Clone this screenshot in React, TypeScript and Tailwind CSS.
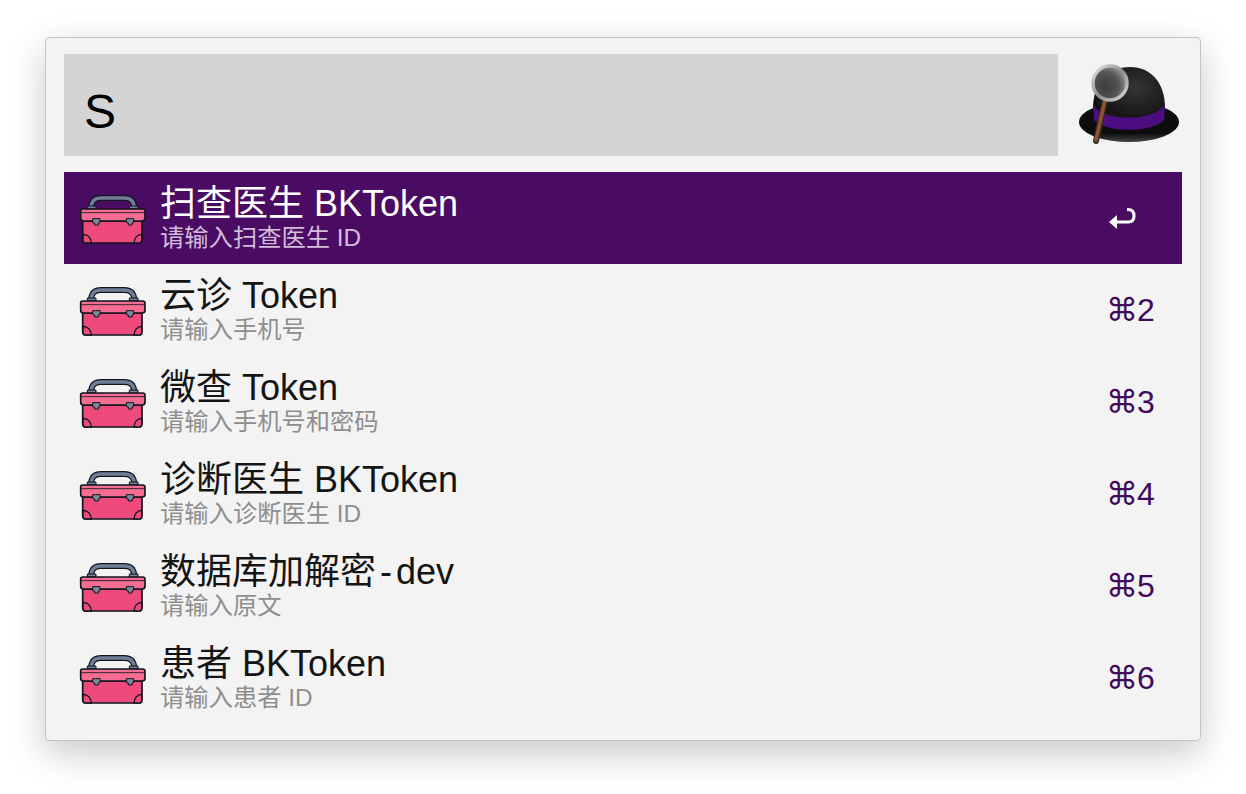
import React from "react";

const font = '"Liberation Sans", "Noto Sans CJK SC", sans-serif';

function Toolbox() {
  return (
    <svg viewBox="45 62 204 156" className="w-[68px] h-[52px] shrink-0 ml-[15px] mt-[1px]">
      <path d="M80 108 L84 92 Q90 77 110 77 L182 77 Q202 77 208 92 L212 108" fill="none" stroke="#11151f" strokeWidth="18" />
      <path d="M80 108 L84 92 Q90 77 110 77 L182 77 Q202 77 208 92 L212 108" fill="none" stroke="#6f7f98" strokeWidth="11" />
      <path d="M70 101 H96 V110 H70 Z M196 101 H222 V110 H196 Z" fill="#6f7f98" stroke="#11151f" strokeWidth="3" />
      <path d="M56 146 H234 V202 Q234 212 224 212 H66 Q56 212 56 202 Z" fill="#ee4a7c" stroke="#11151f" strokeWidth="5" />
      <path d="M50 116 Q50 110 56 110 H236 Q243 110 243 116 V138 Q243 146 235 146 H58 Q50 146 50 138 Z" fill="#f56d92" stroke="#11151f" strokeWidth="5" />
      <path d="M52 121 H241" stroke="#11151f" strokeWidth="2.5" />
      <path d="M58 186 Q80 188 82 212 H66 Q57 212 57 202 Z M233 186 Q212 188 210 212 H224 Q233 212 233 202 Z" fill="#ee4a7c" stroke="#11151f" strokeWidth="4" />
      <path d="M86 139 H108 V151 L103 152 V158 H92 V152 L86 151 Z M187 139 H209 V151 L204 152 V158 H193 V152 L187 151 Z" fill="#7d8a9e" stroke="#11151f" strokeWidth="3" />
    </svg>
  );
}

function Hat() {
  return (
    <svg viewBox="0 0 140 120" className="w-[140px] h-[120px] block">
      <defs>
        <filter id="soft"><feGaussianBlur stdDeviation="0.5" /></filter>
        <radialGradient id="dome" cx="0.6" cy="0.35" r="0.7">
          <stop offset="0" stopColor="#353535" />
          <stop offset="0.6" stopColor="#1c1c1c" />
          <stop offset="1" stopColor="#0c0c0c" />
        </radialGradient>
        <linearGradient id="brim" x1="0" y1="0" x2="0" y2="1">
          <stop offset="0" stopColor="#111" />
          <stop offset="0.8" stopColor="#111" />
          <stop offset="1" stopColor="#444" />
        </linearGradient>
        <radialGradient id="lens" cx="0.35" cy="0.6" r="0.75">
          <stop offset="0" stopColor="#3c3c3c" />
          <stop offset="0.55" stopColor="#555" />
          <stop offset="1" stopColor="#a8a8a8" />
        </radialGradient>
        <linearGradient id="ring" x1="0" y1="0" x2="1" y2="1">
          <stop offset="0" stopColor="#e8e8e8" />
          <stop offset="0.5" stopColor="#8c8c8c" />
          <stop offset="1" stopColor="#dcdcdc" />
        </linearGradient>
      </defs>
      <g filter="url(#soft)">
        <ellipse cx="69" cy="82" rx="50" ry="20" fill="url(#brim)" />
        <path d="M33 72 C32 42 48 27 70 27 C92 27 105 44 105 68 C100 90 40 92 33 72 Z" fill="url(#dome)" />
        <path d="M33 65 C45 82 92 82 105 65 L104 80 C92 93 46 93 34 80 Z" fill="#4c0f7f" />
        <path d="M45 60 L36 101" stroke="#3a2a1e" strokeWidth="6" strokeLinecap="round" />
        <path d="M45 60 L36 100" stroke="#8a5230" strokeWidth="3.5" strokeLinecap="round" />
        <circle cx="50" cy="43" r="17" fill="url(#lens)" stroke="url(#ring)" strokeWidth="3.5" />
      </g>
    </svg>
  );
}

function ReturnIcon() {
  return (
    <svg viewBox="0 0 28 24" className="w-[28px] h-[24px] absolute left-[1108px] top-[207px]" fill="none">
      <path d="M19 2.5 H20 Q26 2.5 26 9 Q26 15 20 15 H7" stroke="#fff" strokeWidth="3" />
      <path d="M1 15 L9 8 V22 Z" fill="#fff" />
    </svg>
  );
}

const rows: [React.ReactNode, string, string][] = [
  ["扫查医生 BKToken", "请输入扫查医生 ID", ""],
  ["云诊 Token", "请输入手机号", "⌘2"],
  ["微查 Token", "请输入手机号和密码", "⌘3"],
  ["诊断医生 BKToken", "请输入诊断医生 ID", "⌘4"],
  [<>数据库加解密<span className="mx-[4px]">-</span>dev</>, "请输入原文", "⌘5"],
  ["患者 BKToken", "请输入患者 ID", "⌘6"],
];

export default function App() {
  return (
    <div className="w-[1246px] h-[794px] bg-white pt-[37px] pl-[45px] overflow-hidden" style={{ fontFamily: font }}>
      <ReturnIcon />
      <div className="w-[1156px] h-[704px] bg-[#f3f3f3] rounded-[4px] border border-[#c4c4c4] pt-[16px] pl-[18px] shadow-[0_12px_36px_rgba(0,0,0,0.22)]">
        <div className="flex h-[102px]">
          <div className="w-[994px] h-[102px] bg-[#d4d4d4] flex items-center pl-[20px] pt-[14px] text-[48px] text-black">S</div>
          <div className="-mt-[14px] ml-[2px] w-[140px] h-[120px]"><Hat /></div>
        </div>
        <div className="mt-[16px] w-[1118px]">
          {rows.map((r, i) => (
            <div key={i} className={`h-[92px] flex items-center ${i === 0 ? "bg-[#4a0b62]" : ""}`}>
              <Toolbox />
              <div className="ml-[13px] flex-1 flex flex-col -mt-[2px]">
                <div className={`text-[36px] leading-[40px] ${i === 0 ? "text-white" : "text-[#141414]"}`}>{r[0]}</div>
                <div className={`text-[24.3px] leading-[26px] mt-[1px] ${i === 0 ? "text-[#d3bcdc]" : "text-[#8e8e8e]"}`}>{r[1]}</div>
              </div>
              <div className="w-[76px] text-[32px] tracking-[-1px] text-[#3f0a5c]" style={{ fontFamily: '"Liberation Sans", "DejaVu Sans", sans-serif' }}>{r[2]}</div>
            </div>
          ))}
        </div>
      </div>
    </div>
  );
}
